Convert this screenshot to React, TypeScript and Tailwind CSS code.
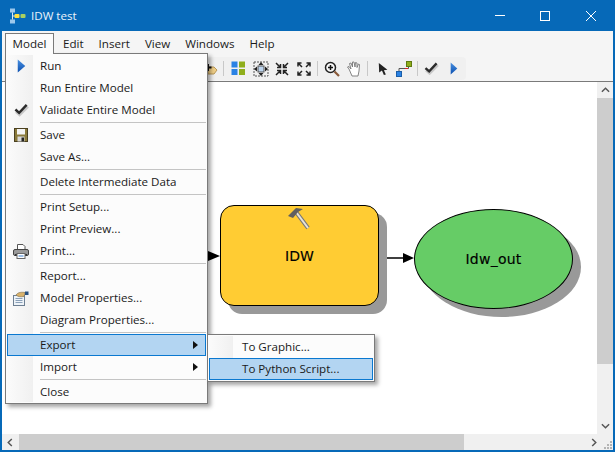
const FONT = "font-['Open_Sans','Noto_Sans',sans-serif]";

type MenuEntry =
  | { sep: true }
  | { label: string; icon?: React.ReactNode; arrow?: boolean; active?: boolean };

function RunIcon({ className }: { className?: string }) {
  return (
    <svg viewBox="0 0 12 14" className={className} preserveAspectRatio="none">
      <defs>
        <linearGradient id="runGrad" x1="0" y1="0" x2="0" y2="1">
          <stop offset="0" stopColor="#4a90e0" />
          <stop offset="1" stopColor="#0a4fb0" />
        </linearGradient>
      </defs>
      <path d="M1 0.5 L11 7 L1 13.5 Z" fill="url(#runGrad)" />
    </svg>
  );
}

function CheckIcon({ className }: { className?: string }) {
  return (
    <svg viewBox="0 0 16 14" className={className}>
      <path d="M2 9 L6 12.5 L15 3.5" fill="none" stroke="#c8c8c8" strokeWidth="2.5" />
      <path d="M1.5 6.5 L5.5 10 L13.5 1.5" fill="none" stroke="#2b2b2b" strokeWidth="2.6" />
    </svg>
  );
}

function SaveIcon() {
  return (
    <svg viewBox="0 0 14 14" className="w-[14px] h-[14px]">
      <rect x="0.5" y="0.5" width="13" height="13" fill="#8a7a3a" stroke="#4a4020" />
      <rect x="3" y="1" width="8" height="5.5" fill="#f4f4f4" />
      <rect x="3.5" y="8.5" width="7" height="5" fill="#d8d8d8" />
      <rect x="7.5" y="9.5" width="2.5" height="4" fill="#222" />
    </svg>
  );
}

function PrintIcon() {
  return (
    <svg viewBox="0 0 16 15" className="w-[16px] h-[15px]">
      <path d="M4.5 0.5 H10 L12 2.5 V6 H4.5 Z" fill="#fff" stroke="#555" />
      <rect x="0.5" y="5.5" width="15" height="6" rx="1.5" fill="#9a9a9a" stroke="#444" />
      <rect x="2" y="10" width="12" height="2" fill="#333" />
      <rect x="4" y="9.5" width="8" height="5" fill="#fff" stroke="#666" />
      <rect x="5.5" y="11.5" width="5" height="1" fill="#3a7fd0" />
    </svg>
  );
}

function PropsIcon() {
  return (
    <svg viewBox="0 0 16 15" className="w-[16px] h-[15px]">
      <rect x="0.5" y="4.5" width="11" height="10" fill="#eef3f8" stroke="#6d7f92" />
      <path d="M2.5 7.5 H9.5 M2.5 9.5 H9.5 M2.5 11.5 H9.5" stroke="#8aa0b8" />
      <path d="M3 4 C5 1 9 1 12 1.5 L11 5.5 C8 6 5 6 3 4 Z" fill="#d9b26a" stroke="#7a6a4a" strokeWidth="0.6" />
      <rect x="12" y="0.5" width="3.5" height="3.5" fill="#27507f" />
    </svg>
  );
}

const MODEL_MENU: MenuEntry[] = [
  { label: "Run", icon: <RunIcon className="w-[9px] h-[14px]" /> },
  { label: "Run Entire Model" },
  { label: "Validate Entire Model", icon: <CheckIcon className="w-[15px] h-[14px]" /> },
  { sep: true },
  { label: "Save", icon: <SaveIcon /> },
  { label: "Save As..." },
  { sep: true },
  { label: "Delete Intermediate Data" },
  { sep: true },
  { label: "Print Setup..." },
  { label: "Print Preview..." },
  { label: "Print...", icon: <PrintIcon /> },
  { sep: true },
  { label: "Report..." },
  { label: "Model Properties...", icon: <PropsIcon /> },
  { label: "Diagram Properties..." },
  { sep: true },
  { label: "Export", arrow: true, active: true },
  { label: "Import", arrow: true },
  { sep: true },
  { label: "Close" },
];

function MenuRow({ entry }: { entry: MenuEntry }) {
  if ("sep" in entry) {
    return <div className="h-[3px] ml-[33px] flex items-center"><div className="h-px w-full bg-[#c4c4c4]" /></div>;
  }
  return (
    <div
      className={
        "h-[22px] flex items-center border " +
        (entry.active ? "border-[#0a78d0] bg-[#b3d5f2]" : "border-transparent")
      }
    >
      <span className="w-[32px] shrink-0">
        <span className="w-[26px] flex justify-center">{entry.icon}</span>
      </span>
      <span className="flex-1 text-[#1a1a1a]">{entry.label}</span>
      {entry.arrow && (
        <svg viewBox="0 0 5 8" className="w-[5px] h-[8px] mr-[7px]">
          <path d="M0 0 L5 4 L0 8 Z" fill="#111" />
        </svg>
      )}
    </div>
  );
}

function ToolbarSep({ className }: { className?: string }) {
  return <div className={"w-px h-[15px] bg-[#c8c8c8] mx-[4px] " + (className ?? "")} />;
}

function Toolbar() {
  return (
    <div className="h-[28px] bg-[#f5f5f5] flex items-start border-b border-b-[#7a7a7a] shrink-0">
      <div className="ml-[202px] mt-[3px] h-[23px] pr-[8px] bg-[#f0f0f0] rounded-r flex items-center">
        {/* add data */}
        <svg viewBox="0 0 14 14" className="w-[14px] h-[14px] mr-[1px]">
          <path d="M4 5 H10 L13 8 L10 12 H4 Z" fill="#f0cf88" stroke="#b89858" />
          <path d="M4 2 V9 M1 5.5 H7.5" stroke="#111" strokeWidth="2" />
        </svg>
        <ToolbarSep />
        <svg viewBox="0 0 15 15" className="w-[15px] h-[15px] ml-[3px]">
          <rect x="0.5" y="0.5" width="6" height="6" fill="#2a82e4" />
          <rect x="8" y="0.5" width="6" height="6" fill="#8fae1b" />
          <rect x="0.5" y="8" width="6" height="6" fill="#2a82e4" />
          <rect x="8" y="8" width="6" height="6" fill="#8fae1b" />
        </svg>
        <svg viewBox="0 0 16 16" className="w-[16px] h-[16px] ml-[7px]">
          <rect x="1" y="1" width="14" height="14" fill="none" stroke="#555" strokeDasharray="2 1" />
          <rect x="5" y="5" width="6" height="6" fill="#bcd4ee" stroke="#555" />
          <path d="M8 1 L10.5 4 H5.5 Z M8 15 L5.5 12 H10.5 Z M1 8 L4 5.5 V10.5 Z M15 8 L12 10.5 V5.5 Z" fill="#222" />
        </svg>
        <svg viewBox="0 0 14 14" className="w-[14px] h-[14px] ml-[6px]">
          <path d="M1 1 L5.5 5.5 M5.5 2 V5.5 H2 M13 1 L8.5 5.5 M8.5 2 V5.5 H12 M1 13 L5.5 8.5 M5.5 12 V8.5 H2 M13 13 L8.5 8.5 M8.5 12 V8.5 H12" fill="none" stroke="#222" strokeWidth="1.5" />
        </svg>
        <svg viewBox="0 0 14 14" className="w-[14px] h-[14px] ml-[8px] mr-[2px]">
          <path d="M5 5 L1 1 M1 4.5 V1 H4.5 M9 5 L13 1 M9.5 1 H13 V4.5 M5 9 L1 13 M1 9.5 V13 H4.5 M9 9 L13 13 M13 9.5 V13 H9.5" fill="none" stroke="#222" strokeWidth="1.5" />
        </svg>
        <ToolbarSep />
        <svg viewBox="0 0 16 16" className="w-[16px] h-[16px] ml-[2px]">
          <circle cx="6.5" cy="6.5" r="5" fill="#f8f8f8" stroke="#222" strokeWidth="1.5" />
          <path d="M4 6.5 H9 M6.5 4 V9" stroke="#111" strokeWidth="1.5" />
          <path d="M10.5 10.5 L15 15" stroke="#8a5a3a" strokeWidth="2.2" />
        </svg>
        <svg viewBox="0 0 16 16" className="w-[16px] h-[16px] ml-[6px] mr-[1px]">
          <path d="M3 8 L1.5 6 L3 5.5 L5 8 L3.5 2.5 L5 2 L6.5 6 L6.5 1 L8 1 L9 6 L9.5 1.5 L11 2 L11 6.5 L12.5 3 L13.5 3.5 L13 10 L12 15 H6 Z" fill="#fff" stroke="#777" strokeWidth="0.9" />
        </svg>
        <ToolbarSep />
        <svg viewBox="0 0 14 16" className="w-[11px] h-[14px] ml-[6px]">
          <path d="M1 0.5 L12 9 L7.5 9.5 L10 15 L7.5 15.5 L5 10 L1.5 12.5 Z" fill="#222" />
        </svg>
        <svg viewBox="0 0 16 16" className="w-[16px] h-[16px] ml-[7px] mr-[1px]">
          <path d="M3 11 V7.5 H12.5 V4" fill="none" stroke="#555" />
          <path d="M9 7.5 H12" stroke="#e02020" />
          <rect x="0.5" y="10.5" width="5" height="5" fill="#2a82e4" stroke="#1a5ea8" />
          <rect x="10.5" y="0.5" width="5" height="5" fill="#8fae1b" stroke="#5f7a10" />
        </svg>
        <ToolbarSep />
        <CheckIcon className="w-[15px] h-[13px] ml-[2px]" />
        <RunIcon className="w-[8px] h-[13px] ml-[11px]" />
      </div>
    </div>
  );
}

function Diagram() {
  return (
    <>
      <svg className="absolute left-0 top-0" width="595" height="352">
        <path d="M196 174 H207 M376 176 H402" stroke="#000" strokeWidth="1.5" />
        <path d="M206 169 L218 174 L206 179 Z M401 171 L412 176 L401 181 Z" fill="#000" />
      </svg>
      <div className="absolute left-[218px] top-[123px] w-[159px] h-[101px] bg-[#ffcc33] border border-black rounded-[14px] shadow-[8px_8px_0_#999] flex items-center justify-center text-[14px] font-['DejaVu_Sans',sans-serif] [-webkit-text-stroke:0.15px_black] text-black">
        <svg viewBox="0 0 24 24" className="absolute left-[66px] top-[1px] w-[24px] h-[24px]">
          <path d="M9 5 L21 21" stroke="#777" strokeWidth="4" />
          <path d="M9 5 L21 21" stroke="#e8e4d8" strokeWidth="2" />
          <path d="M1 9 L9 1 L16 2 L11 5 L6 11 Z" fill="#5f5f5f" />
        </svg>
        IDW
      </div>
      <div className="absolute left-[412px] top-[127px] w-[159px] h-[100px] bg-[#66cc66] border border-black rounded-[50%] shadow-[8px_8px_0_#999] flex items-center justify-center text-[14px] tracking-[0.25px] font-['DejaVu_Sans',sans-serif] [-webkit-text-stroke:0.15px_black] text-black">
        Idw_out
      </div>
    </>
  );
}

export default function App() {
  return (
    <div className={"relative w-[615px] h-[452px] overflow-hidden bg-[#0669b8] flex flex-col px-[2px] pb-[2px] text-[11.6px] leading-none " + FONT}>
      {/* title bar */}
      <div className="h-[31px] flex items-center shrink-0 text-[#eaf3fa]">
        <svg viewBox="0 0 18 16" className="w-[18px] h-[16px] ml-[7px] mr-[4px]">
          <rect x="1" y="0.5" width="5" height="4" fill="#9cc8ec" />
          <rect x="1" y="11.5" width="5" height="4" fill="#9cc8ec" />
          <path d="M3.5 4.5 V11.5 M3.5 8 H7" stroke="#d8e8f4" />
          <rect x="5.5" y="6" width="5" height="4" rx="1" fill="#ffe040" />
          <rect x="11.5" y="6" width="5" height="4" rx="1" fill="#a8d060" />
        </svg>
        <span>IDW test</span>
        <div className="ml-auto flex items-center">
          <svg viewBox="0 0 10 1" className="w-[10px] h-px mr-[35px]"><rect width="10" height="1" fill="#fff" /></svg>
          <div className="w-[10px] h-[10px] border border-white mr-[36px]" />
          <svg viewBox="0 0 10 10" className="w-[10px] h-[10px] mr-[17px]"><path d="M0 0 L10 10 M10 0 L0 10" stroke="#fff" strokeWidth="1" /></svg>
        </div>
      </div>

      {/* menu bar */}
      <div className="h-[23px] bg-[#f5f5f5] flex items-end shrink-0 text-[#1a1a1a] pl-[3px]">
        <span className="h-[21px] w-[49px] flex items-center justify-center border border-[#7a7a7a] border-b-0 bg-[#fcfcfc] relative z-20">Model</span>
        <div className="h-[21px] flex items-center gap-[15px] ml-[9px]">
          <span>Edit</span>
          <span>Insert</span>
          <span>View</span>
          <span>Windows</span>
          <span>Help</span>
        </div>
      </div>

      <Toolbar />

      {/* canvas + scrollbars */}
      <div className="flex-1 flex min-h-0">
        <div className="flex-1 bg-white relative">
          <Diagram />
        </div>
        <div className="w-[16px] bg-[#f0f0f0] flex flex-col items-center">
          <svg viewBox="0 0 10 6" className="w-[9px] h-[6px] mt-[5px]"><path d="M1 5 L5 1 L9 5" fill="none" stroke="#555" strokeWidth="1.6" /></svg>
          <div className="w-full h-[266px] mt-[5px] bg-[#cdcdcd]" />
          <svg viewBox="0 0 10 6" className="w-[9px] h-[6px] mt-auto mb-[5px]"><path d="M1 1 L5 5 L9 1" fill="none" stroke="#555" strokeWidth="1.6" /></svg>
        </div>
      </div>
      <div className="h-[16px] bg-[#f0f0f0] flex items-center shrink-0">
        <svg viewBox="0 0 6 10" className="w-[6px] h-[9px] ml-[5px] mr-[6px]"><path d="M5 1 L1 5 L5 9" fill="none" stroke="#555" strokeWidth="1.6" /></svg>
        <div className="w-[445px] h-full bg-[#cdcdcd]" />
        <svg viewBox="0 0 6 10" className="w-[6px] h-[9px] ml-auto mr-[6px]"><path d="M1 1 L5 5 L1 9" fill="none" stroke="#555" strokeWidth="1.6" /></svg>
        <svg viewBox="0 0 9 9" className="w-[9px] h-[9px] mt-[5px] mr-[1px]">
          <path d="M7 1 h2 v2 h-2 Z M4 4 h2 v2 h-2 Z M7 4 h2 v2 h-2 Z M1 7 h2 v2 h-2 Z M4 7 h2 v2 h-2 Z M7 7 h2 v2 h-2 Z" fill="#b4b4b4" />
        </svg>
      </div>

      {/* Model menu */}
      <div className="absolute left-[5px] top-[53px] w-[203px] h-[351px] bg-[#fcfcfc] border border-[#7a7a7a] shadow-[3px_3px_4px_rgba(0,0,0,0.35)] z-10 p-px">
        <div className="absolute left-px top-px bottom-px w-[26px] bg-gradient-to-r from-[#fbfbfb] to-[#f0f0f0]" />
        <div className="relative">
          {MODEL_MENU.map((entry, i) => (
            <MenuRow key={i} entry={entry} />
          ))}
        </div>
      </div>

      {/* Export submenu */}
      <div className="absolute left-[207px] top-[334px] w-[168px] h-[48px] bg-[#fcfcfc] border border-[#7a7a7a] shadow-[3px_3px_4px_rgba(0,0,0,0.35)] z-20 p-px">
        <div className="absolute left-px top-px bottom-px w-[24px] bg-gradient-to-r from-[#fbfbfb] to-[#f0f0f0]" />
        <div className="relative h-[22px] flex items-center border border-transparent pl-[32px] text-[#1a1a1a]">To Graphic...</div>
        <div className="relative h-[22px] flex items-center border border-[#0a78d0] bg-[#b3d5f2] pl-[32px] text-[#1a1a1a]">To Python Script...</div>
      </div>
    </div>
  );
}
